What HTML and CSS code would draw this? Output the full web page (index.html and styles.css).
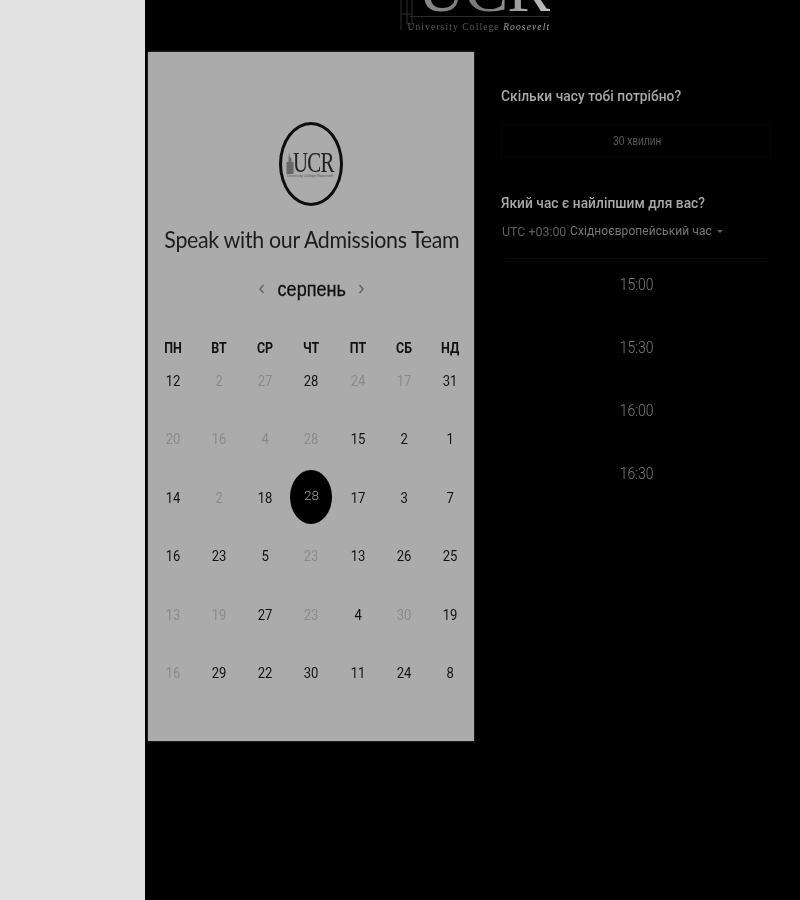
FILE: index.html
```html
<!DOCTYPE html>
<html lang="uk">
<head>
<meta charset="utf-8">
<title>Speak with our Admissions Team</title>
<link rel="stylesheet" href="styles.css">
</head>
<body>
<div class="page">
  <aside class="sidebar"></aside>
  <main class="main">
    <header class="top">
      <div class="brand">
        <svg class="brand-tower" width="18" height="34" viewBox="0 0 18 34" aria-hidden="true"><path d="M3 0V30M9 0V24H14V0M14 14H3" fill="none" stroke="#2e2e2e" stroke-width="1"/></svg>
        <div class="brand-mark">UCR</div>
        <div class="brand-rule"></div>
        <div class="brand-sub">University College <em>Roosevelt</em></div>
      </div>
    </header>
    <div class="columns">
      <section class="card">
        <div class="badge">
          <svg class="badge-tower" width="8" height="22" viewBox="0 0 8 22" aria-hidden="true"><path d="M3 0L4 6H5.500V10H7.500V22H0.500V10H2.500Z" fill="#666"/></svg>
          <div class="badge-text">
            <span class="badge-ucr">UCR</span>
            <span class="badge-sub">University College Roosevelt</span>
          </div>
        </div>
        <h1 class="title">Speak with our Admissions Team</h1>
        <div class="month">
          <svg class="chev" width="7" height="12" viewBox="0 0 7 12" aria-hidden="true"><path d="M5.500 2L2 6L5.500 10" fill="none" stroke="#666" stroke-width="1.500"/></svg>
          <span class="month-name">серпень</span>
          <svg class="chev" width="7" height="12" viewBox="0 0 7 12" aria-hidden="true"><path d="M1.500 2L5 6L1.500 10" fill="none" stroke="#666" stroke-width="1.500"/></svg>
        </div>
        <div class="weekdays">
          <span>ПН</span><span>ВТ</span><span>СР</span><span>ЧТ</span><span>ПТ</span><span>СБ</span><span>НД</span>
        </div>
        <div class="days">
          <span class="day">12</span><span class="day off">2</span><span class="day off">27</span><span class="day">28</span><span class="day off">24</span><span class="day off">17</span><span class="day">31</span>
          <span class="day off">20</span><span class="day off">16</span><span class="day off">4</span><span class="day off">28</span><span class="day">15</span><span class="day">2</span><span class="day">1</span>
          <span class="day">14</span><span class="day off">2</span><span class="day">18</span><span class="day selected"><span class="dot">28</span></span><span class="day">17</span><span class="day">3</span><span class="day">7</span>
          <span class="day">16</span><span class="day">23</span><span class="day">5</span><span class="day off">23</span><span class="day">13</span><span class="day">26</span><span class="day">25</span>
          <span class="day off">13</span><span class="day off">19</span><span class="day">27</span><span class="day off">23</span><span class="day">4</span><span class="day off">30</span><span class="day">19</span>
          <span class="day off">16</span><span class="day">29</span><span class="day">22</span><span class="day">30</span><span class="day">11</span><span class="day">24</span><span class="day">8</span>
        </div>
      </section>
      <section class="panel">
        <h2 class="q">Скільки часу тобі потрібно?</h2>
        <div class="duration"><span class="duration-text">30 хвилин</span></div>
        <h2 class="q q-second">Який час є найліпшим для вас?</h2>
        <div class="zone"><span class="utc">UTC +03:00</span> <span class="zone-name">Східноєвропейський час</span><span class="caret"></span></div>
        <div class="slots">
          <div class="slot"><span class="slot-text">15:00</span></div>
          <div class="slot"><span class="slot-text">15:30</span></div>
          <div class="slot"><span class="slot-text">16:00</span></div>
          <div class="slot"><span class="slot-text">16:30</span></div>
        </div>
      </section>
    </div>
  </main>
</div>
</body>
</html>
```
FILE: styles.css
```css
* { box-sizing: border-box; }
html, body { margin: 0; height: 100%; }
body { background: #000; overflow: hidden; font-family: "Liberation Sans", Arial, sans-serif; }
.page { display: flex; height: 900px; }
.sidebar { width: 145px; flex: none; background: #e2e2e2; }
.main { flex: 1; background: #000; min-width: 0; }

.top { height: 52px; overflow: hidden; display: flex; justify-content: center; padding-left: 16px; }
.brand { position: relative; width: 160px; height: 52px; }
.brand-tower { position: absolute; left: -3px; top: 0; }
.brand-mark { position: absolute; left: 17px; top: -34px; font: 66px/46px "Liberation Serif", serif; letter-spacing: -1px; background: linear-gradient(90deg, #8a8a8a, #777 50%, #c4c4c4); -webkit-background-clip: text; background-clip: text; color: transparent; filter: blur(.3px); }
.brand-rule { position: absolute; left: 9px; right: 12px; top: 16px; height: 1px; background: #2c2c2c; }
.brand-sub { position: absolute; left: 7px; top: 22px; font: 9.500px/11px "Liberation Serif", serif; letter-spacing: 1.120px; color: #5a5a5a; white-space: nowrap; filter: blur(.3px); }
.brand-sub em { color: #a0a0a0; font-style: italic; }

.columns { display: flex; align-items: flex-start; padding-left: 3px; }
.card { width: 326px; height: 689px; flex: none; background: #ababab; box-shadow: 0 0 2px #555; padding: 70px 1px 0 2px; }

.badge { width: 64px; height: 84px; margin-left: 129px; border: 3px solid #0d0d0d; border-radius: 50%; display: flex; align-items: center; justify-content: center; }
.badge-tower { margin: 0 -15px 2px 5px; flex: none; }
.badge-text { display: flex; flex-direction: column; align-items: center; }
.badge-ucr { margin-left: 6px; font: 29px/24px "Liberation Serif", serif; letter-spacing: -1px; color: #222; transform: scaleX(.72); filter: blur(.25px); }
.badge-sub { font: 3.600px/5px "Liberation Sans", sans-serif; color: #555; white-space: nowrap; }

.title { margin: 18px 4px 0 0; text-align: center; font: 400 23.500px/30px Lato, sans-serif; letter-spacing: -.35px; color: #1c1c1c; white-space: nowrap; transform: scaleX(.91); filter: blur(.35px); }

.month { margin-top: 20px; height: 30px; display: flex; align-items: center; justify-content: center; gap: 7px; }
.month-name { font-size: 21px; line-height: 30px; color: #111; -webkit-text-stroke: .3px #111; filter: blur(.3px); transform: scaleX(.86); }
.chev { flex: none; }

.weekdays { margin-top: 35px; display: grid; grid-template-columns: repeat(7, 1fr); height: 20px; font: 700 14.500px/20px Roboto, sans-serif; color: #111; text-align: center; filter: blur(.25px); }
.weekdays span { transform: scaleX(.86); }
.days { margin-top: 13px; display: grid; grid-template-columns: repeat(7, 1fr); grid-auto-rows: 58.400px; }
.day { display: flex; align-items: center; justify-content: center; height: 20px; font: 14.500px/20px Roboto, sans-serif; color: #111; transform: scaleX(.9); filter: blur(.25px); }
.day.off { color: #8a8a8a; }
.day.selected { position: relative; transform: none; filter: none; }
.dot { position: absolute; left: 50%; top: 50%; width: 42px; height: 54px; margin: -29px 0 0 -21px; padding-bottom: 4px; border-radius: 50%; background: #000; color: #9a9a9a; display: flex; align-items: center; justify-content: center; font-weight: 300; font-size: 13.500px; filter: blur(.25px); }

.panel { width: 270px; margin-left: 27px; padding-top: 34px; flex: none; }
.q { margin: 0; font: 500 15px/20px Roboto, "Liberation Sans", sans-serif; letter-spacing: .05px; color: #a8a8a8; transform: scaleX(.915); transform-origin: left center; filter: blur(.3px); white-space: nowrap; }
.duration { margin-top: 18px; height: 33px; border: 1px solid #070707; display: flex; align-items: center; justify-content: center; padding-left: 2px; }
.duration-text { font: 12px/16px "Liberation Sans", sans-serif; color: #5c5c5c; transform: scaleX(.86); filter: blur(.3px); }
.q-second { margin-top: 36px; }
.zone { margin-top: 8px; padding-left: 1px; height: 20px; font: 13.500px/20px Roboto, sans-serif; color: #5e5e5e; white-space: nowrap; display: flex; align-items: center; gap: 4px; transform: scaleX(.92); transform-origin: left center; filter: blur(.25px); }
.zone-name { color: #777; font-size: 13px; letter-spacing: .1px; }
.caret { margin-left: 2px; border: 3px solid transparent; border-top: 3px solid #666; border-bottom: 0; }
.slots { margin: 17px 4px 0; border-top: 1px solid #0c0c0c; }
.slot { height: 63px; padding: 0 0 14px 2px; display: flex; align-items: center; justify-content: center; }
.slot-text { font: 300 17px/20px Roboto, sans-serif; color: #7c7c7c; transform: scaleX(.82); filter: blur(.25px); }
```
